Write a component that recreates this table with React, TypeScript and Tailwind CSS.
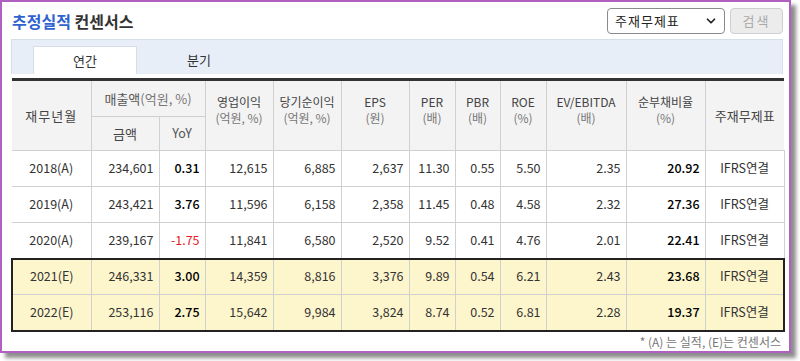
import { ChevronDown } from "lucide-react"

interface Row {
  year: string
  sales: string
  yoy: string
  op: string
  net: string
  eps: string
  per: string
  pbr: string
  roe: string
  ev: string
  debt: string
  est?: boolean
}

const rows: Row[] = [
  { year: "2018(A)", sales: "234,601", yoy: "0.31", op: "12,615", net: "6,885", eps: "2,637", per: "11.30", pbr: "0.55", roe: "5.50", ev: "2.35", debt: "20.92" },
  { year: "2019(A)", sales: "243,421", yoy: "3.76", op: "11,596", net: "6,158", eps: "2,358", per: "11.45", pbr: "0.48", roe: "4.58", ev: "2.32", debt: "27.36" },
  { year: "2020(A)", sales: "239,167", yoy: "-1.75", op: "11,841", net: "6,580", eps: "2,520", per: "9.52", pbr: "0.41", roe: "4.76", ev: "2.01", debt: "22.41" },
  { year: "2021(E)", sales: "246,331", yoy: "3.00", op: "14,359", net: "8,816", eps: "3,376", per: "9.89", pbr: "0.54", roe: "6.21", ev: "2.43", debt: "23.68", est: true },
  { year: "2022(E)", sales: "253,116", yoy: "2.75", op: "15,642", net: "9,984", eps: "3,824", per: "8.74", pbr: "0.52", roe: "6.81", ev: "2.28", debt: "19.37", est: true },
]

const widths = ["w-[79px]", "w-[68px]", "w-[46px]", "w-[68px]", "w-[68px]", "w-[68px]", "w-[46px]", "w-[45px]", "w-[46px]", "w-[80px]", "w-[79px]", "w-[79px]"]

function HeadTwo({ top, sub }: { top: string; sub: string }) {
  return (
    <th rowSpan={2} className="border border-[#d0d0d0] font-normal text-[12px] leading-[16px] align-middle pb-[12px]">
      <div className="text-[#444]">{top}</div>
      <div className="text-[#777]">{sub}</div>
    </th>
  )
}

export default function App() {
  return (
    <div className="w-[800px] h-[361px] bg-white" style={{ fontFamily: '"Noto Sans CJK KR", "Noto Sans", sans-serif' }}>
      <div className="w-[791px] h-[353px] border-2 border-[#b060c0] bg-white shadow-[5px_5px_4px_rgba(0,0,0,0.45)] pl-[9px] pr-[6px]">
        <div className="flex items-center justify-between h-[36px] pt-[2px]">
          <div className="text-[16px] font-bold pl-[1px]">
            <span className="text-[#2f63d0]">추정실적</span>{" "}
            <span className="text-[#333]">컨센서스</span>
          </div>
          <div className="flex items-center gap-[5px]">
            <div className="w-[118px] h-[26px] border border-[#8a8a8a] rounded-[4px] flex items-center justify-between pl-[7px] pr-[6px] text-[13px] text-[#222] tracking-[1px]">
              <span>주재무제표</span>
              <ChevronDown size={14} strokeWidth={3} className="text-[#222]" />
            </div>
            <div className="w-[53px] h-[26px] border border-[#cfcfcf] bg-[#ececec] rounded-[4px] flex items-center justify-center text-[13px] text-[#aaa] tracking-[2px]">
              검색
            </div>
          </div>
        </div>

        <div className="h-[35px] mt-[1px] bg-[#e8eef8] border border-[#d6deea] border-b-0 flex items-end pl-[21px]">
          <div className="w-[104px] h-[28px] bg-white border-t border-x border-[#d6deea] flex items-center justify-center text-[13px] text-[#333]">
            연간
          </div>
          <div className="w-[124px] h-[28px] flex items-center justify-center text-[13px] text-[#333]">분기</div>
        </div>

        <table className="w-[772px] table-fixed border-collapse mt-[4px] border-t-[3px] border-t-[#333] text-[12.5px]">
          <colgroup>
            {widths.map((w, i) => (
              <col key={i} className={w} />
            ))}
          </colgroup>
          <thead className="bg-[#f3f3f3]">
            <tr className="h-[37px]">
              <th rowSpan={2} className="border-y border-r border-[#d0d0d0] font-normal text-[13px] text-[#444] tracking-[1px]">재무년월</th>
              <th colSpan={2} className="border border-[#d0d0d0] font-normal text-[13px] text-[#555]">
                매출액<span className="text-[#777]">(억원, %)</span>
              </th>
              <HeadTwo top="영업이익" sub="(억원, %)" />
              <HeadTwo top="당기순이익" sub="(억원, %)" />
              <HeadTwo top="EPS" sub="(원)" />
              <HeadTwo top="PER" sub="(배)" />
              <HeadTwo top="PBR" sub="(배)" />
              <HeadTwo top="ROE" sub="(%)" />
              <HeadTwo top="EV/EBITDA" sub="(배)" />
              <HeadTwo top="순부채비율" sub="(%)" />
              <th rowSpan={2} className="border-y border-l border-[#d0d0d0] font-normal text-[13px] text-[#444]">주재무제표</th>
            </tr>
            <tr className="h-[34px]">
              <th className="border border-[#d0d0d0] font-normal text-[13px] text-[#444]">금액</th>
              <th className="border border-[#d0d0d0] font-normal text-[#555]">YoY</th>
            </tr>
          </thead>
          <tbody className="text-[#333]">
            {rows.map((r, i) => {
              const bg = r.est ? "bg-[#fdf6cc]" : "bg-white"
              const top = r.est && i === 3 ? "border-t-2 border-t-[#222]" : ""
              const bot = r.est && i === 4 ? "border-b-2 border-b-[#222]" : ""
              const cell = `border border-[#d0d0d0] text-right pr-[5px] ${top} ${bot}`
              return (
                <tr key={r.year} className={`h-[36px] ${bg}`}>
                  <td className={`border border-[#d0d0d0] text-center ${top} ${bot} ${r.est ? "border-l-2 border-l-[#222]" : "border-l-0"}`}>{r.year}</td>
                  <td className={cell}>{r.sales}</td>
                  <td className={`${cell} ${r.yoy.startsWith("-") ? "text-[#e8202a]" : "text-[#000] font-medium"}`}>{r.yoy}</td>
                  <td className={cell}>{r.op}</td>
                  <td className={cell}>{r.net}</td>
                  <td className={cell}>{r.eps}</td>
                  <td className={cell}>{r.per}</td>
                  <td className={cell}>{r.pbr}</td>
                  <td className={cell}>{r.roe}</td>
                  <td className={cell}>{r.ev}</td>
                  <td className={`${cell} font-medium text-[#000]`}>{r.debt}</td>
                  <td className={`border border-[#d0d0d0] text-center ${top} ${bot} ${r.est ? "border-r-2 border-r-[#222]" : ""}`}>IFRS연결</td>
                </tr>
              )
            })}
          </tbody>
        </table>

        <div className="text-right text-[12px] text-[#777] mt-[1px] pr-[2px]">* (A) 는 실적, (E)는 컨센서스</div>
      </div>
    </div>
  )
}
